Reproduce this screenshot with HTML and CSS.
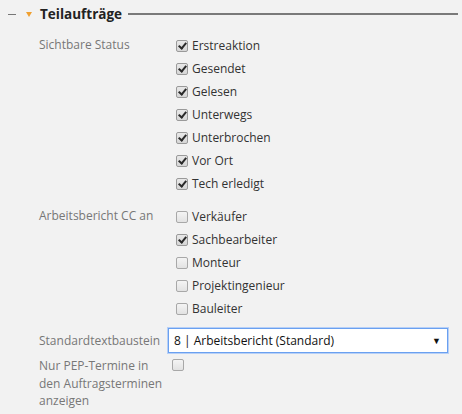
FILE: index.html
```html
<!DOCTYPE html>
<html lang="de">
<head>
<meta charset="utf-8">
<link rel="stylesheet" href="styles.css">
</head>
<body>
<div class="panel">
  <div class="legend">
    <span class="dash"></span>
    <span class="caret"></span>
    <span class="title">Teilaufträge</span>
    <span class="rule"></span>
  </div>
  <div class="form">
    <div class="label">Sichtbare Status</div>
    <div class="checks">
      <label class="check"><span class="box on"></span>Erstreaktion</label>
      <label class="check"><span class="box on"></span>Gesendet</label>
      <label class="check"><span class="box on"></span>Gelesen</label>
      <label class="check"><span class="box on"></span>Unterwegs</label>
      <label class="check"><span class="box on"></span>Unterbrochen</label>
      <label class="check"><span class="box on"></span>Vor Ort</label>
      <label class="check"><span class="box on"></span>Tech erledigt</label>
    </div>
    <div class="label">Arbeitsbericht CC an</div>
    <div class="checks checks-last">
      <label class="check"><span class="box"></span>Verkäufer</label>
      <label class="check"><span class="box on"></span>Sachbearbeiter</label>
      <label class="check"><span class="box"></span>Monteur</label>
      <label class="check"><span class="box"></span>Projektingenieur</label>
      <label class="check"><span class="box"></span>Bauleiter</label>
    </div>
    <div class="label label-select">Standardtextbaustein</div>
    <div class="select"><span>8 | Arbeitsbericht (Standard)</span><span class="arrow">▼</span></div>
    <div class="label label-multi">Nur PEP-Termine in<br>den Auftragsterminen<br>anzeigen</div>
    <div class="single"><span class="box"></span></div>
  </div>
</div>
</body>
</html>
```
FILE: styles.css
```css
html, body {
  margin: 0;
  padding: 0;
  background: #f2f2f2;
}
body {
  font-family: "Open Sans", "Noto Sans", sans-serif;
  font-size: 12px;
  color: #333;
  width: 462px;
  height: 414px;
  overflow: hidden;
}
.panel {
  padding: 4px 4px 0 8px;
}
.legend {
  display: flex;
  align-items: center;
  height: 20px;
}
.dash {
  width: 8px;
  height: 1px;
  background: #777;
}
.caret {
  width: 0;
  height: 0;
  border-left: 3.5px solid transparent;
  border-right: 3.5px solid transparent;
  border-top: 5px solid #f0a030;
  margin-left: 10px;
}
.title {
  font-weight: 700;
  font-size: 13.5px;
  color: #222;
  margin-left: 8px;
}
.rule {
  flex: 1;
  height: 2px;
  background: #7a7a7a;
  margin-left: 6px;
}
.form {
  display: grid;
  grid-template-columns: 129px 280px;
  padding-left: 31px;
  margin-top: 10px;
}
.label {
  color: #777;
  font-size: 12px;
  line-height: 17px;
  padding-top: 2px;
}
.checks {
  display: flex;
  flex-direction: column;
  padding-left: 8px;
  margin-bottom: 10px;
}
.checks-last {
  margin-bottom: 7px;
}
.check {
  display: flex;
  align-items: center;
  height: 23px;
  font-size: 12px;
  color: #333;
}
.box {
  display: block;
  flex-shrink: 0;
  box-sizing: border-box;
  width: 12px;
  height: 12px;
  border: 1px solid #a8a8a8;
  border-radius: 2px;
  background: linear-gradient(#f4f4f4, #e2e2e2);
  margin-right: 4px;
  position: relative;
}
.box.on {
  background: linear-gradient(#e8e8e8, #d6d6d6);
  border-color: #9a9a9a;
}
.box.on::after {
  content: "";
  position: absolute;
  left: 3px;
  top: 0px;
  width: 3px;
  height: 6px;
  border-right: 2px solid #2a2a2a;
  border-bottom: 2px solid #2a2a2a;
  transform: rotate(40deg);
}
.label-select {
  padding-top: 5px;
}
.select {
  display: flex;
  justify-content: space-between;
  align-items: center;
  box-sizing: border-box;
  height: 25px;
  background: #fff;
  border: 1px solid #6aa0f0;
  box-shadow: 0 0 0 1px #b7d0f7;
  padding: 0 6px 0 5px;
  font-size: 12px;
  color: #111;
  margin-top: 1px;
}
.arrow {
  font-size: 9px;
  color: #111;
}
.label-multi {
  margin-top: 2px;
  line-height: 17.5px;
}
.single {
  padding-left: 4px;
  padding-top: 6px;
}
```
